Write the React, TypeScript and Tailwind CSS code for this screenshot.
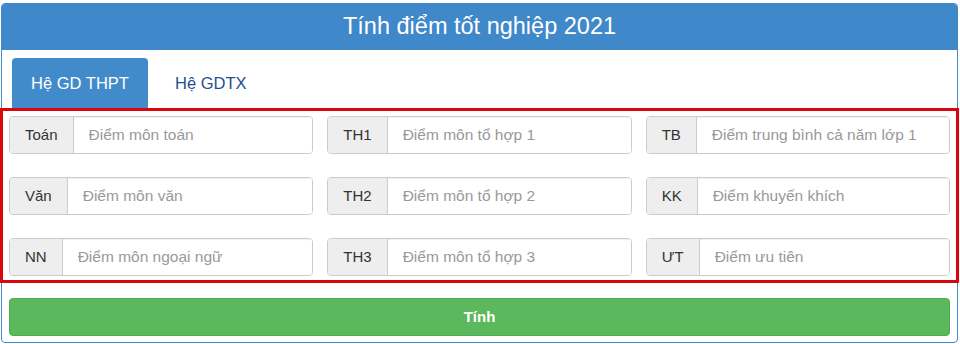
import React from "react";

const fields: [string, string][] = [
  ["Toán", "Điểm môn toán"],
  ["TH1", "Điểm môn tổ hợp 1"],
  ["TB", "Điểm trung bình cả năm lớp 12"],
  ["Văn", "Điểm môn văn"],
  ["TH2", "Điểm môn tổ hợp 2"],
  ["KK", "Điểm khuyến khích"],
  ["NN", "Điểm môn ngoại ngữ"],
  ["TH3", "Điểm môn tổ hợp 3"],
  ["ƯT", "Điểm ưu tiên"],
];

export default function App() {
  return (
    <div className="relative w-[960px] h-[344px] bg-white pt-[3px] pl-[1px] pr-[2px] font-['Liberation_Sans',Arial,sans-serif]">
      <div className="h-[340px] border border-[#428bca] rounded-[4px] overflow-hidden flex flex-col bg-white">
        <div className="h-[46px] shrink-0 bg-[#3f88c9] text-white text-[23.5px] flex items-center justify-center">
          Tính điểm tốt nghiệp 2021
        </div>
        <div className="h-[58px] shrink-0 pt-[8px] pl-[10px] flex">
          <div className="w-[136px] h-[50px] bg-[#428bca] rounded-t-[4px] text-white text-[16.5px] flex items-center justify-center">
            Hệ GD THPT
          </div>
          <div className="h-[50px] px-[27px] text-[16.5px] text-[#1f4f8f] flex items-center">
            Hệ GDTX
          </div>
        </div>
        <div className="px-[7px] pt-[8px] grid grid-cols-3 gap-x-[14px] gap-y-[23px]">
          {fields.map(([label, ph]) => (
            <div
              key={label}
              className="flex h-[38px] border border-[#ccc] rounded-[4px] overflow-hidden"
            >
              <div className="bg-[#eee] border-r border-[#ccc] px-[15px] flex items-center text-[15px] text-[#333]">
                {label}
              </div>
              <input
                className="flex-1 min-w-0 pl-[15px] pr-[32px] text-[15.5px] text-[#333] placeholder:text-[#999] outline-none bg-white shadow-[inset_0_1px_1px_rgba(0,0,0,0.06)]"
                placeholder={ph}
              />
            </div>
          ))}
        </div>
        <div className="px-[7px] mt-[22px]">
          <button className="w-full h-[38px] bg-[#5cb85c] border border-[#4cae4c] rounded-[4px] text-white text-[15px] font-bold">
            Tính
          </button>
        </div>
      </div>
      <div className="absolute left-0 top-[108px] w-[959px] h-[175px] border-[3px] border-[#d9070d] pointer-events-none" />
    </div>
  );
}
